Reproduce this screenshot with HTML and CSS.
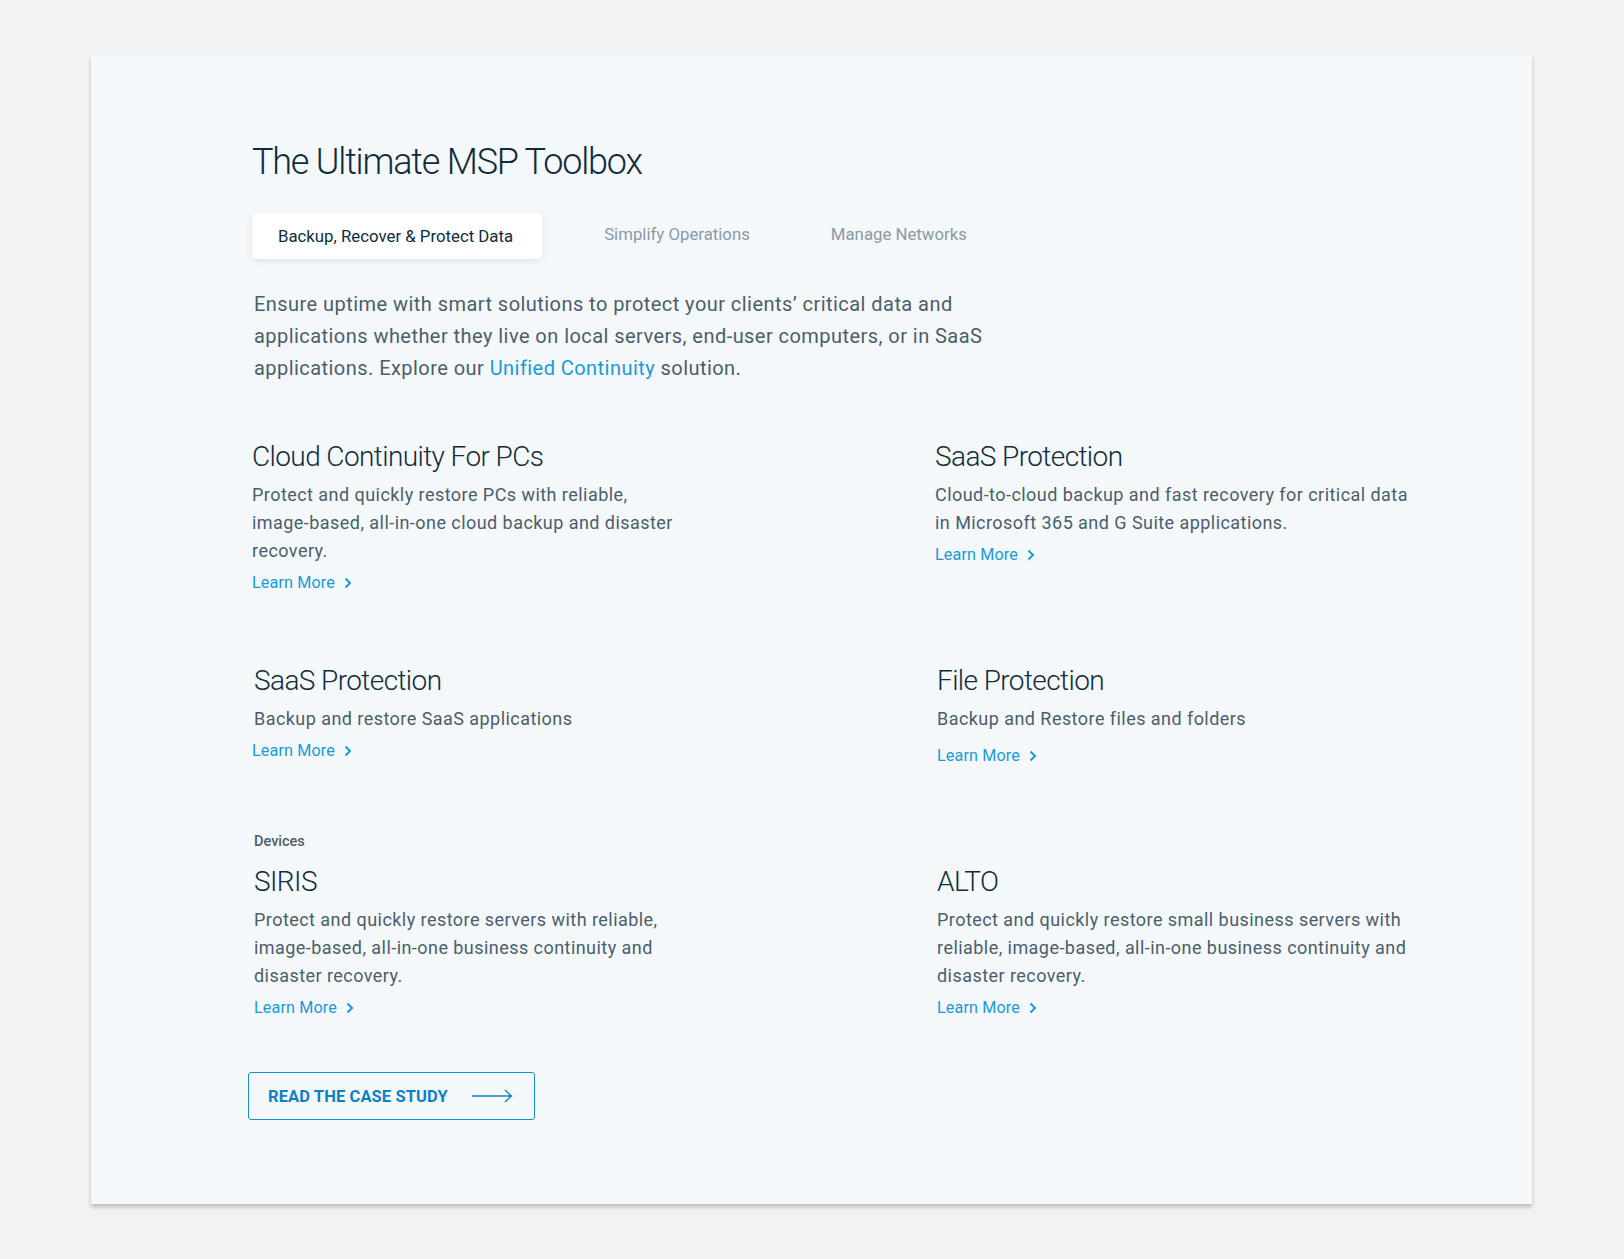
FILE: index.html
```html
<!DOCTYPE html>
<html lang="en">
<head>
<meta charset="utf-8">
<title>The Ultimate MSP Toolbox</title>
<link rel="stylesheet" href="styles.css">
</head>
<body>
<main class="card">
  <h1 class="title">The Ultimate MSP Toolbox</h1>
  <nav class="tabs">
    <span class="tab tab-active">Backup, Recover &amp; Protect Data</span>
    <span class="tab">Simplify Operations</span>
    <span class="tab">Manage Networks</span>
  </nav>
  <p class="intro">Ensure uptime with smart solutions to protect your clients’ critical data and applications whether they live on local servers, end-user computers, or in SaaS applications. Explore our <a class="inline-link" href="#">Unified Continuity</a> solution.</p>

  <section class="grid">
    <article class="item item-left">
      <h2 class="item-title">Cloud Continuity For PCs</h2>
      <p class="item-desc">Protect and quickly restore PCs with reliable, image-based, all-in-one cloud backup and disaster recovery.</p>
      <a class="learn" href="#">Learn More <svg class="chev" viewBox="0 0 8 12" width="8" height="12"><path d="M1.5 1.5 6 6l-4.5 4.5" fill="none" stroke="currentColor" stroke-width="2"/></svg></a>
    </article>
    <article class="item">
      <h2 class="item-title">SaaS Protection</h2>
      <p class="item-desc">Cloud-to-cloud backup and fast recovery for critical data in Microsoft 365 and G Suite applications.</p>
      <a class="learn" href="#">Learn More <svg class="chev" viewBox="0 0 8 12" width="8" height="12"><path d="M1.5 1.5 6 6l-4.5 4.5" fill="none" stroke="currentColor" stroke-width="2"/></svg></a>
    </article>
    <article class="item item-left item-shift">
      <h2 class="item-title">SaaS Protection</h2>
      <p class="item-desc">Backup and restore SaaS applications</p>
      <a class="learn learn-back" href="#">Learn More <svg class="chev" viewBox="0 0 8 12" width="8" height="12"><path d="M1.5 1.5 6 6l-4.5 4.5" fill="none" stroke="currentColor" stroke-width="2"/></svg></a>
    </article>
    <article class="item item-shift">
      <h2 class="item-title">File Protection</h2>
      <p class="item-desc">Backup and Restore files and folders</p>
      <a class="learn learn-low" href="#">Learn More <svg class="chev" viewBox="0 0 8 12" width="8" height="12"><path d="M1.5 1.5 6 6l-4.5 4.5" fill="none" stroke="currentColor" stroke-width="2"/></svg></a>
    </article>
    <article class="item item-left item-shift item-devices">
      <div class="eyebrow">Devices</div>
      <h2 class="item-title">SIRIS</h2>
      <p class="item-desc">Protect and quickly restore servers with reliable, image-based, all-in-one business continuity and disaster recovery.</p>
      <a class="learn" href="#">Learn More <svg class="chev" viewBox="0 0 8 12" width="8" height="12"><path d="M1.5 1.5 6 6l-4.5 4.5" fill="none" stroke="currentColor" stroke-width="2"/></svg></a>
    </article>
    <article class="item item-shift item-devices">
      <div class="eyebrow eyebrow-empty" aria-hidden="true">&nbsp;</div>
      <h2 class="item-title">ALTO</h2>
      <p class="item-desc">Protect and quickly restore small business servers with reliable, image-based, all-in-one business continuity and disaster recovery.</p>
      <a class="learn" href="#">Learn More <svg class="chev" viewBox="0 0 8 12" width="8" height="12"><path d="M1.5 1.5 6 6l-4.5 4.5" fill="none" stroke="currentColor" stroke-width="2"/></svg></a>
    </article>
  </section>

  <a class="cta" href="#">READ THE CASE STUDY
    <svg class="arrow" viewBox="0 0 42 14" width="42" height="14"><path d="M0 7h40M33 1l6.5 6L33 13" fill="none" stroke="currentColor" stroke-width="1.3"/></svg>
  </a>
</main>
</body>
</html>
```

FILE: styles.css
```css
* { box-sizing: border-box; }

html, body {
  margin: 0;
  padding: 0;
  background: #f2f2f2;
}

body {
  font-family: Roboto, "Noto Sans", "Liberation Sans", sans-serif;
  color: #4a5e6b;
  padding: 55px 0 55px 91px;
}

.card {
  width: 1441px;
  background: #f4f8fb;
  box-shadow: 0 3px 4px rgba(0, 0, 0, 0.22);
  padding: 84px 100px 84px 161px;
}

.title {
  margin: 0;
  font-weight: 300;
  font-size: 36px;
  line-height: 46px;
  color: #0f2c3d;
  letter-spacing: -1.2px;
}

.tabs {
  display: flex;
  align-items: center;
  gap: 34px;
  margin-top: 28px;
}

.tab {
  font-size: 16.8px;
  line-height: 20px;
  padding: 11px 28px 15px;
  color: #8b9aa5;
}

.tab + .tab { margin-left: -9px; }
.tab-active + .tab { margin-left: 0; }

.tab-active {
  background: #ffffff;
  color: #0f2c3d;
  border-radius: 4px;
  box-shadow: 0 2px 6px rgba(30, 50, 70, 0.10);
  padding: 13px 29px 13px 26px;
}

.intro {
  margin: 29px 0 0 2px;
  width: 760px;
  font-size: 20px;
  line-height: 32px;
  letter-spacing: 0.45px;
  color: #4a5e6b;
}

.inline-link {
  color: #1a9ad7;
  text-decoration: none;
}

.grid {
  display: grid;
  grid-template-columns: 683px 1fr;
  row-gap: 70px;
  margin-top: 55px;
}

.item-shift { padding-left: 2px; }
.item-devices { margin-top: -3px; }

.item-title {
  margin: 0;
  font-weight: 300;
  font-size: 28px;
  line-height: 36px;
  letter-spacing: -0.6px;
  color: #0f2c3d;
}

.item-desc {
  margin: 6px 0 0;
  width: 482px;
  font-size: 18px;
  line-height: 28px;
  letter-spacing: 0.45px;
  color: #4a5e6b;
}

.item-left .item-desc { width: 430px; }

.learn {
  display: inline-flex;
  align-items: center;
  gap: 9px;
  margin-top: 8px;
  font-size: 16.2px;
  line-height: 20px;
  letter-spacing: 0.1px;
  color: #1a9ad7;
  text-decoration: none;
}

.learn-back { margin-left: -2px; }
.learn-low { margin-top: 13px; }

.chev { display: block; }

.eyebrow {
  font-size: 14.5px;
  font-weight: 500;
  line-height: 18px;
  color: #4a5e6b;
  margin-bottom: 13px;
}

.cta {
  display: inline-flex;
  align-items: center;
  gap: 24px;
  margin: 54px 0 0 -4px;
  height: 48px;
  padding: 0 20px 0 19px;
  border: 1px solid #1a8fd0;
  border-radius: 3px;
  font-size: 16.5px;
  font-weight: 700;
  color: #0c80c6;
  text-decoration: none;
  letter-spacing: 0.1px;
}

.arrow { display: block; }
```
